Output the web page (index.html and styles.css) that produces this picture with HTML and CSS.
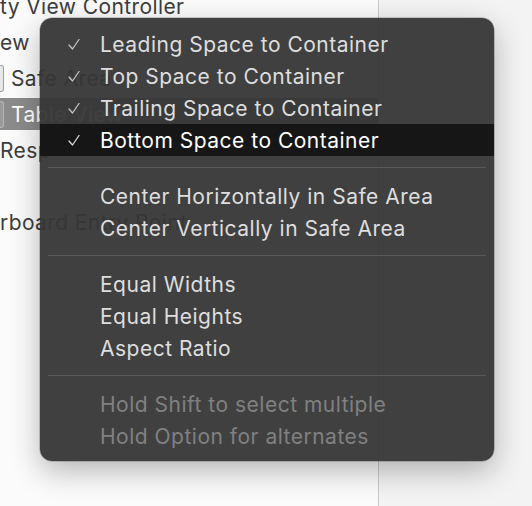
FILE: index.html
```html
<!DOCTYPE html>
<html>
<head>
<meta charset="utf-8">
<link rel="stylesheet" href="styles.css">
</head>
<body>
<div class="app">
  <div class="outline">
    <div class="orow">ty View Controller</div>
    <div class="orow">ew</div>
    <div class="orow"><span class="obox"></span>Safe Area</div>
    <div class="orow sel"><span class="obox"></span>Table View</div>
    <div class="orow">Resp</div>
    <div class="orow"></div>
    <div class="orow">rboard Entry Point</div>
  </div>
  <div class="vline"></div>
  <div class="side"></div>
</div>

<div class="menu">
  <div class="item"><span class="chk"><svg width="12" height="11" viewBox="0 0 12 11"><polyline points="1,6 4.5,10 11,0.5"/></svg></span>Leading Space to Container</div>
  <div class="item"><span class="chk"><svg width="12" height="11" viewBox="0 0 12 11"><polyline points="1,6 4.5,10 11,0.5"/></svg></span>Top Space to Container</div>
  <div class="item"><span class="chk"><svg width="12" height="11" viewBox="0 0 12 11"><polyline points="1,6 4.5,10 11,0.5"/></svg></span>Trailing Space to Container</div>
  <div class="item hl"><span class="chk"><svg width="12" height="11" viewBox="0 0 12 11"><polyline points="1,6 4.5,10 11,0.5"/></svg></span>Bottom Space to Container</div>
  <div class="sep"></div>
  <div class="item"><span class="chk"></span>Center Horizontally in Safe Area</div>
  <div class="item"><span class="chk"></span>Center Vertically in Safe Area</div>
  <div class="sep"></div>
  <div class="item"><span class="chk"></span>Equal Widths</div>
  <div class="item"><span class="chk"></span>Equal Heights</div>
  <div class="item"><span class="chk"></span>Aspect Ratio</div>
  <div class="sep"></div>
  <div class="item dis"><span class="chk"></span>Hold Shift to select multiple</div>
  <div class="item dis"><span class="chk"></span>Hold Option for alternates</div>
</div>
</body>
</html>
```

FILE: styles.css
```css
html, body {
  margin: 0;
  padding: 0;
}
body {
  width: 532px;
  height: 506px;
  overflow: hidden;
  position: relative;
  font-family: Inter, "Noto Sans", sans-serif;
  background: #f3f3f3;
}
.app {
  display: grid;
  grid-template-columns: 378px 1px 1fr;
  height: 506px;
}
.outline {
  background: #fbfbfb;
  margin-top: -12px;
  display: flex;
  flex-direction: column;
}
.orow {
  height: 36px;
  display: flex;
  align-items: center;
  font-size: 21px;
  letter-spacing: 0.4px;
  color: #3d3d3d;
  white-space: nowrap;
}
.orow.sel {
  background: #8b8b8b;
  color: #ffffff;
  height: 32px;
  margin: 2px 0;
}
.obox {
  width: 3px;
  height: 25px;
  border: 1px solid #a0a0a0;
  border-left: none;
  border-radius: 0 3px 3px 0;
  margin-right: 7px;
  background: #e8e8e8;
}
.orow.sel .obox {
  background: #9a9a9a;
  border-color: #b5b5b5;
}
.vline {
  background: #c9c9c9;
}
.side {
  background: #f3f3f3;
}
.menu {
  position: absolute;
  left: 40px;
  top: 18px;
  width: 454px;
  box-sizing: border-box;
  padding: 10px 0 9px;
  background: rgba(54, 54, 54, 0.95);
  border-radius: 12px;
  box-shadow: 0 0 0 0.5px rgba(0,0,0,0.35), 0 10px 30px rgba(0,0,0,0.28);
  overflow: hidden;
}
.item {
  height: 32px;
  display: flex;
  align-items: center;
  font-size: 21px;
  letter-spacing: 0.5px;
  color: #dedede;
  white-space: nowrap;
}
.item.hl {
  background: #161616;
  color: #ffffff;
}
.item.dis {
  color: #808080;
}
.chk {
  width: 60px;
  display: flex;
  justify-content: flex-end;
  padding-right: 20px;
  box-sizing: border-box;
  flex-shrink: 0;
}
.chk svg {
  fill: none;
  stroke: #c2c2c2;
  stroke-width: 1.3;
  stroke-linecap: round;
  stroke-linejoin: round;
}
.item.hl .chk svg {
  stroke: #d8d8d8;
}
.sep {
  height: 1px;
  background: #5a5a5a;
  margin: 11px 8px 12px;
}
```
